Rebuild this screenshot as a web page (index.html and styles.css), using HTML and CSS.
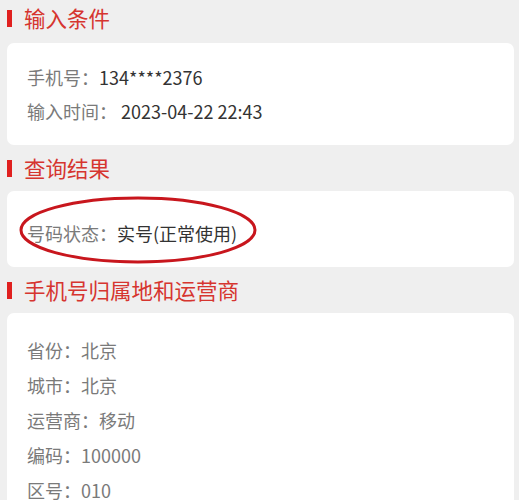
FILE: index.html
```html
<!DOCTYPE html>
<html lang="zh-CN">
<head>
    <meta charset="UTF-8">
    <meta name="viewport" content="width=device-width, initial-scale=1.0">
    <title>号码查询结果</title>
    <link rel="stylesheet" href="styles.css">
</head>
<body>
    <div class="title title-first"><span class="bar"></span>输入条件</div>
    <div class="card card-input">
        <p class="row"><span class="label">手机号：</span><span class="value">134****2376</span></p>
        <p class="row"><span class="label">输入时间：</span><span class="value"> 2023-04-22 22:43</span></p>
    </div>

    <div class="title"><span class="bar"></span>查询结果</div>
    <div class="card card-result">
        <p class="row"><span class="label">号码状态：</span><span class="value">实号(正常使用)</span></p>
        <!-- 手绘的红圈标注 -->
        <svg class="circle-mark" width="246" height="72" viewBox="0 0 246 72">
            <ellipse cx="123" cy="36" rx="117" ry="32" fill="none" stroke="#c8161d" stroke-width="3"/>
        </svg>
    </div>

    <div class="title"><span class="bar"></span>手机号归属地和运营商</div>
    <div class="card card-area">
        <p class="row"><span class="label">省份：</span><span class="label">北京</span></p>
        <p class="row"><span class="label">城市：</span><span class="label">北京</span></p>
        <p class="row"><span class="label">运营商：</span><span class="label">移动</span></p>
        <p class="row"><span class="label">编码：</span><span class="label">100000</span></p>
        <p class="row"><span class="label">区号：</span><span class="label">010</span></p>
    </div>
</body>
</html>
```

FILE: styles.css
```css
body {
    margin: 0;
    padding: 0 5px 0 7px;
    background-color: #efefef;
    font-family: "Noto Sans CJK SC", sans-serif;
}
.title {
    display: flex;
    align-items: center;
    padding: 11px 0;
    line-height: 24px;
    font-size: 21.5px;
    color: #d6352f;
}
.title-first {
    padding: 6px 0 13px;
}
.bar {
    display: inline-block;
    width: 5px;
    height: 17px;
    margin-right: 12px;
    background-color: #e0201f;
}
.card {
    position: relative;
    background-color: #fff;
    border-radius: 7px;
    padding: 17px 20px;
}
.card-result {
    padding: 25px 20px 17px;
}
.card-area {
    padding: 20px 20px 30px;
}
.row {
    margin: 0;
    line-height: 34px;
    font-size: 18px;
}
.card-area .row {
    line-height: 35px;
}
.label {
    color: #7a7a7a;
}
.value {
    color: #333;
    white-space: pre;
}
.circle-mark {
    position: absolute;
    left: 8px;
    top: 3px;
}
```
